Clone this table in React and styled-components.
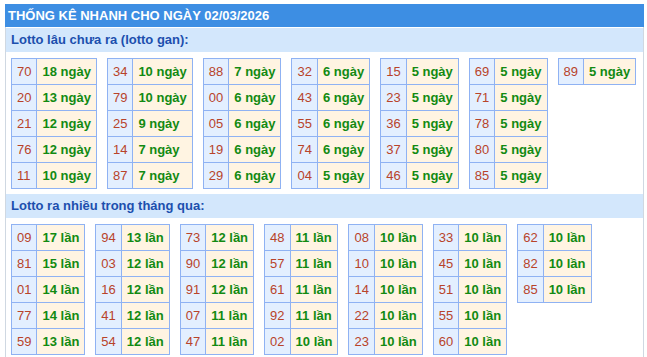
import React from 'react';
import styled, { createGlobalStyle } from 'styled-components';

const GlobalStyle = createGlobalStyle`
  body {
    margin: 0;
    background: #fff;
    font-family: "Liberation Sans", Arial, sans-serif;
  }
`;

const Box = styled.div`
  margin: 4px 3px 0 5px;
  border-left: 1px solid #cfd8e2;
  border-right: 1px solid #cfd8e2;
`;

const Header = styled.div`
  margin: 0 -1px;
  height: 23px;
  line-height: 23px;
  padding-left: 3px;
  background: #3d8ee3;
  color: #fff;
  font-size: 13px;
  font-weight: bold;
`;

const SubHeader = styled.div`
  margin-top: 1px;
  height: 24px;
  line-height: 24px;
  padding-left: 5px;
  background: #d3e7fc;
  color: #1c4fae;
  font-size: 13px;
  font-weight: bold;
`;

const TableList = styled.div`
  display: flex;
  flex-wrap: wrap;
  align-items: flex-start;
  gap: 10px;
  padding: 6px 0 4px 5px;
`;

const Table = styled.table`
  border-collapse: collapse;
  font-size: 13px;
`;

const Cell = styled.td`
  border: 1px solid #8fb2f3;
  height: 26px;
  padding: 0 5px;
  box-sizing: border-box;
  white-space: nowrap;
  background: ${(p) => (p.$num ? '#e3efff' : '#fff4e2')};
  color: ${(p) => (p.$num ? '#b8432a' : '#128a12')};
  font-weight: ${(p) => (p.$num ? 'normal' : 'bold')};
`;

const gan = [
  [['70', 18], ['20', 13], ['21', 12], ['76', 12], ['11', 10]],
  [['34', 10], ['79', 10], ['25', 9], ['14', 7], ['87', 7]],
  [['88', 7], ['00', 6], ['05', 6], ['19', 6], ['29', 6]],
  [['32', 6], ['43', 6], ['55', 6], ['74', 6], ['04', 5]],
  [['15', 5], ['23', 5], ['36', 5], ['37', 5], ['46', 5]],
  [['69', 5], ['71', 5], ['78', 5], ['80', 5], ['85', 5]],
  [['89', 5]],
];

const nhieu = [
  [['09', 17], ['81', 15], ['01', 14], ['77', 14], ['59', 13]],
  [['94', 13], ['03', 12], ['16', 12], ['41', 12], ['54', 12]],
  [['73', 12], ['90', 12], ['91', 12], ['07', 11], ['47', 11]],
  [['48', 11], ['57', 11], ['61', 11], ['92', 11], ['02', 10]],
  [['08', 10], ['10', 10], ['14', 10], ['22', 10], ['23', 10]],
  [['33', 10], ['45', 10], ['51', 10], ['55', 10], ['60', 10]],
  [['62', 10], ['82', 10], ['85', 10]],
];

function Group({ columns, unit }) {
  return (
    <TableList>
      {columns.map((col, i) => (
        <Table key={i}>
          <tbody>
            {col.map(([num, count]) => (
              <tr key={num}>
                <Cell $num>{num}</Cell>
                <Cell>
                  {count} {unit}
                </Cell>
              </tr>
            ))}
          </tbody>
        </Table>
      ))}
    </TableList>
  );
}

export default function App() {
  return (
    <>
      <GlobalStyle />
      <Box>
        <Header>THỐNG KÊ NHANH CHO NGÀY 02/03/2026</Header>
        <SubHeader>Lotto lâu chưa ra (lotto gan):</SubHeader>
        <Group columns={gan} unit="ngày" />
        <SubHeader>Lotto ra nhiều trong tháng qua:</SubHeader>
        <Group columns={nhieu} unit="lần" />
      </Box>
    </>
  );
}
